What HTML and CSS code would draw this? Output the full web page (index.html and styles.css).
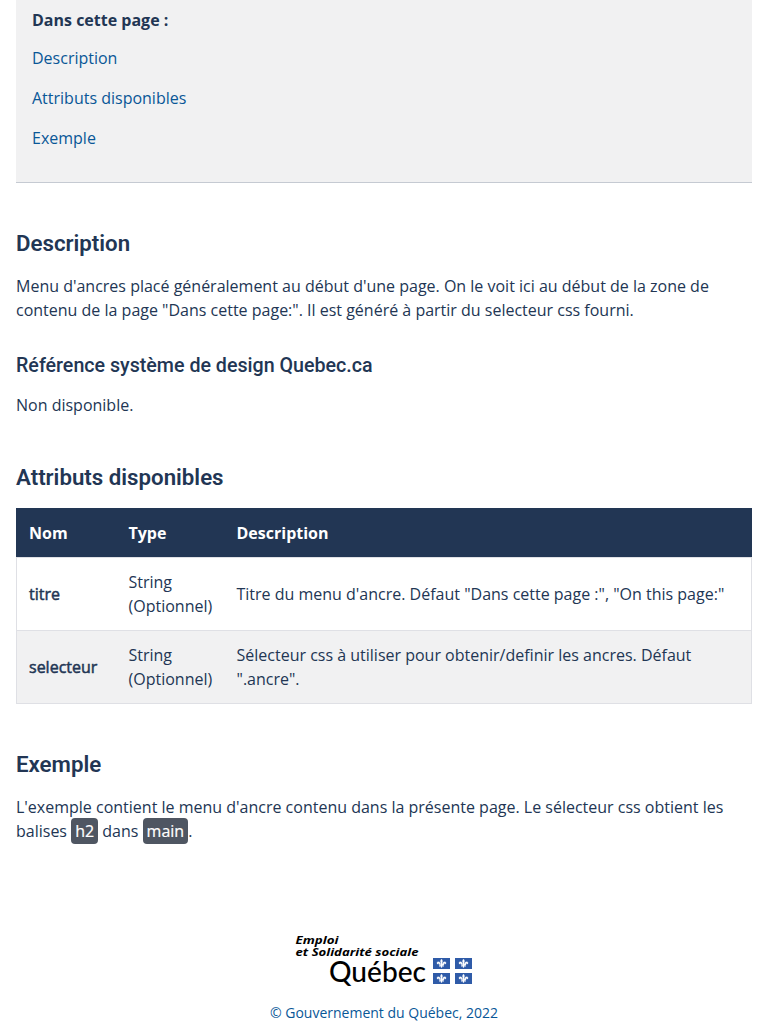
FILE: index.html
```html
<!DOCTYPE html>
<html lang="fr">
<head>
<meta charset="utf-8">
<title>Menu d'ancres</title>
<link rel="stylesheet" href="styles.css">
</head>
<body>
<main>
  <nav class="anchors">
    <h4 class="anchors-title">Dans cette page :</h4>
    <ul>
      <li><a href="#description">Description</a></li>
      <li><a href="#attributs">Attributs disponibles</a></li>
      <li><a href="#exemple">Exemple</a></li>
    </ul>
  </nav>
  <h2 id="description">Description</h2>
  <p>Menu d'ancres placé généralement au début d'une page. On le voit ici au début de la zone de contenu de la page "Dans cette page:". Il est généré à partir du selecteur css fourni.</p>
  <h3>Référence système de design Quebec.ca</h3>
  <p>Non disponible.</p>
  <h2 id="attributs">Attributs disponibles</h2>
  <table>
    <colgroup><col class="col-name"><col class="col-type"><col></colgroup>
    <thead><tr><th>Nom</th><th>Type</th><th>Description</th></tr></thead>
    <tbody>
      <tr><td class="name"><span>titre</span></td><td>String (Optionnel)</td><td>Titre du menu d'ancre. Défaut "Dans cette page :", "On this page:"</td></tr>
      <tr><td class="name"><span>selecteur</span></td><td>String (Optionnel)</td><td>Sélecteur css à utiliser pour obtenir/definir les ancres. Défaut ".ancre".</td></tr>
    </tbody>
  </table>
  <h2 id="exemple">Exemple</h2>
  <p>L'exemple contient le menu d'ancre contenu dans la présente page. Le sélecteur css obtient les balises <code>h2</code> dans <code>main</code>.</p>
</main>
<footer>
  <svg class="logo" width="180" height="58" viewBox="0 0 180 58" role="img" aria-label="Emploi et Solidarité sociale Québec">
    <defs>
      <g id="flag">
        <rect width="17" height="11" fill="#2f5ba8"/>
        <path d="M8.5 1 C7.2 2.5 7.3 3.6 8 5.1 H9 C9.7 3.6 9.8 2.5 8.5 1Z M7.6 5.7 C7.1 3.4 4.4 3 3.9 4.8 C3.8 6.1 5 6.5 5.5 5.6 C6.2 5.4 6.4 6.3 6.2 7 H7.7Z M9.4 5.7 C9.9 3.4 12.6 3 13.1 4.8 C13.2 6.1 12 6.5 11.5 5.6 C10.8 5.4 10.6 6.3 10.8 7 H9.3Z M6 6.3 H11 V7.2 H6Z M8 5 H9 L9.2 8.5 L8.5 10 L7.8 8.5Z M7.7 7.2 L7.1 8.8 L6.2 8.1Z M9.3 7.2 L9.9 8.8 L10.8 8.1Z" fill="#fff" stroke="#fff" stroke-width=".25"/>
      </g>
    </defs>
    <g class="ministry">
      <text x="1.500" y="12" textLength="43" lengthAdjust="spacingAndGlyphs">Emploi</text>
      <text x="1.500" y="24" textLength="123" lengthAdjust="spacingAndGlyphs">et Solidarité sociale</text>
    </g>
    <text class="wordmark" x="35" y="50" textLength="97" lengthAdjust="spacingAndGlyphs">Québec</text>
    <use href="#flag" x="139" y="26"/><use href="#flag" x="161" y="26"/>
    <use href="#flag" x="139" y="41"/><use href="#flag" x="161" y="41"/>
  </svg>
  <a class="copyright" href="#">© Gouvernement du Québec, 2022</a>
</footer>
</body>
</html>
```
FILE: styles.css
```css
* { box-sizing: border-box; }
body {
  margin: 0;
  height: 1024px;
  overflow: hidden;
  background: #fff;
  color: #223654;
  font: 400 16px/24px "Open Sans", sans-serif;
}
main { padding: 0 16px; }
a { color: #095797; text-decoration: none; }
.anchors {
  height: 183px;
  padding: 8px 16px 0;
  background: #f1f1f2;
  border-bottom: 1px solid #c5cad2;
}
.anchors-title { margin: 0 0 14px; font-size: 16px; font-weight: 700; line-height: 24px; }
ul { display: flex; flex-direction: column; gap: 16px; margin: 0; padding: 0; list-style: none; }
h2, h3 { margin: 0; font-family: Roboto, sans-serif; }
h2 { margin: 47px 0 18px; font-size: 22.25px; font-weight: 600; line-height: 26px; }
h3 { margin: 32px 0 16px; font-size: 19.65px; font-weight: 500; line-height: 23px; }
p { margin: 0; }
table { width: 100%; table-layout: fixed; border-collapse: collapse; }
.col-name { width: 100px; }
.col-type { width: 108px; }
th, td { padding: 12px; text-align: left; vertical-align: middle; }
th { background: #223654; color: #fff; font-weight: 700; }
thead tr { height: 49px; border: 1px solid #223654; border-bottom-color: #dfe0e5; }
tbody tr { border: 1px solid #dfe0e5; }
tbody tr:nth-child(2) { background: #f1f1f2; }
.name { -webkit-text-stroke: .5px #223654; }
code {
  padding: 2px 4px;
  border-radius: 4px;
  background: #4f5662;
  color: #fff;
  font: 400 16px/24px "Open Sans", sans-serif;
  -webkit-text-stroke: .2px #fff;
}
footer { display: flex; flex-direction: column; align-items: center; gap: 13px; padding-top: 89px; }
.logo { display: block; }
.ministry { font: italic 700 10.5px "Open Sans", sans-serif; fill: #000; }
.wordmark { font: 500 28px Lato, sans-serif; fill: #000; }
.copyright { font-size: 14px; line-height: 20px; }
```
